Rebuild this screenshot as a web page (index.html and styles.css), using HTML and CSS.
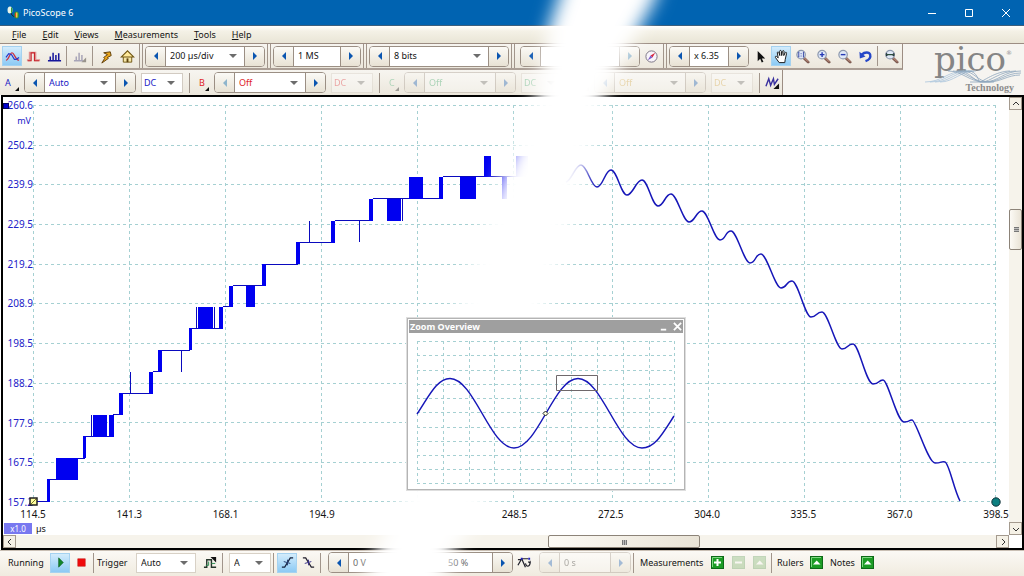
FILE: index.html
```html
<!DOCTYPE html>
<html lang="en">
<head>
<meta charset="utf-8">
<title>PicoScope 6</title>
<link rel="stylesheet" href="styles.css">
</head>
<body>
<svg class="defs" aria-hidden="true">
  <symbol id="prev" viewBox="0 0 6 8"><path d="M5 0v8L1 4z" fill="currentColor"/></symbol>
  <symbol id="next" viewBox="0 0 6 8"><path d="M1 0v8l4-4z" fill="currentColor"/></symbol>
  <symbol id="lens" viewBox="0 0 16 16">
    <path d="M9.500 9.500l4.500 4.500" stroke="#7d5a50" stroke-width="3" stroke-linecap="round"/>
    <path d="M10 9.500l4 4" stroke="#d9a08c" stroke-width="1"/>
    <circle cx="6.500" cy="6" r="4.500" fill="#dfe8f6" stroke="#8c98ae" stroke-width="1.300"/>
  </symbol>
  <symbol id="green-up" viewBox="0 0 13 13">
    <rect x=".5" y=".5" width="12" height="12" fill="#1c9c25" stroke="#0d6a18"/>
    <path d="M1.500 11V1.500H11" fill="none" stroke="#7fd882"/><path d="M3 8.500h7.500L6.700 4.500z" fill="#fff"/>
  </symbol>
</svg>

<header class="titlebar">
  <svg class="app-icon" viewBox="0 0 13 13"><ellipse cx="3" cy="4" rx="2.500" ry="3.500" fill="#e8f4ea"/><path d="M4 1c2 1 2 5 0 6.500z" fill="#2f9c3c"/><path d="M4 7c1 3 3 4 4 3" stroke="#222" fill="none"/><ellipse cx="9.500" cy="9" rx="2.500" ry="3.500" fill="#2f8f34"/><path d="M9 6c-1.500 2-1.500 4 0 6z" fill="#e0392b"/><path d="M9 6.500h1.500v5H9z" fill="#f2c94c"/></svg>
  <h1 class="title">PicoScope 6</h1>
  <div class="window-buttons">
    <button aria-label="Minimize"><svg viewBox="0 0 10 10"><path d="M1 5.500h8" /></svg></button>
    <button aria-label="Maximize"><svg viewBox="0 0 10 10"><path d="M1.500 1.500h7v7h-7z"/></svg></button>
    <button aria-label="Close"><svg viewBox="0 0 10 10"><path d="M1 1l8 8M9 1L1 9"/></svg></button>
  </div>
</header>

<nav class="menubar">
  <a href="#file"><u>F</u>ile</a><a href="#edit"><u>E</u>dit</a><a href="#views"><u>V</u>iews</a><a href="#measurements"><u>M</u>easurements</a><a href="#tools"><u>T</u>ools</a><a href="#help"><u>H</u>elp</a>
</nav>

<section class="toolbars">
  <div class="toolbar-rows">
    <div class="toolbar toolbar-main">
      <button class="tool active" aria-label="Scope mode"><svg viewBox="0 0 16 16" fill="none"><path d="M1 12C4 12 5 4 7.500 4S11 12 15 12" stroke="#d02b3c" stroke-width="1.300"/><path d="M1 9l3-4 3 1 3 5h2l3-2" stroke="#2735c8" stroke-width="1.200"/></svg></button>
      <button class="tool" aria-label="Persistence mode"><svg viewBox="0 0 16 16" fill="none"><path d="M1 12h3V4h6v8h5" stroke="#e09090" stroke-width="2"/><path d="M2 12.500h3.500V4H9v8.500h5" stroke="#c6242b" stroke-width="1.200"/></svg></button>
      <button class="tool" aria-label="Spectrum mode"><svg viewBox="0 0 16 16"><path d="M1 12.500h14M3.500 12V8M6.500 12V4M9.500 12V6.500M12.500 12V4.500" stroke="#16169c" stroke-width="1.600"/></svg></button>
      <span class="sep"></span>
      <button class="tool" disabled aria-label="Spectrum options"><svg viewBox="0 0 16 16"><path d="M1 12.500h10M3.500 12V8M6.500 12V4M9.500 12V6.500" stroke="#a8a5b8" stroke-width="1.600"/><path d="M14 9v5H9z" fill="#99948c"/></svg></button>
      <span class="sep"></span>
      <button class="tool" aria-label="Auto setup"><svg viewBox="0 0 16 16"><path d="M5 4l7-1 1 4-4 2 1 1-7 5 3-5-1-1 4-3z" fill="#e8a51c" stroke="#5c3b08"/></svg></button>
      <button class="tool" aria-label="Home"><svg viewBox="0 0 16 16"><path d="M3.500 8v6h9V8" fill="#f6e6a8" stroke="#6f5511"/><path d="M1.500 8.500L8 2l6.500 6.500z" fill="#ffe99a" stroke="#6f5511" stroke-width="1.200"/><path d="M7 10h2v4H7z" fill="#5c430c"/></svg></button>
      <span class="sep double"></span>
      <div class="stepper w-time"><button aria-label="Shorter timebase"><svg><use href="#prev"/></svg></button><span class="combo"><select aria-label="Timebase"><option>200 µs/div</option></select></span><button aria-label="Longer timebase"><svg><use href="#next"/></svg></button></div>
      <span class="sep double"></span>
      <div class="stepper w-samples"><button aria-label="Fewer samples"><svg><use href="#prev"/></svg></button><input aria-label="Samples" value="1 MS"><button aria-label="More samples"><svg><use href="#next"/></svg></button></div>
      <span class="sep double"></span>
      <div class="stepper w-bits"><button aria-label="Lower resolution"><svg><use href="#prev"/></svg></button><span class="combo"><select aria-label="Resolution"><option>8 bits</option></select></span><button aria-label="Higher resolution"><svg><use href="#next"/></svg></button></div>
      <span class="sep double"></span>
      <div class="stepper w-buffer"><button aria-label="Previous buffer"><svg><use href="#prev"/></svg></button><input aria-label="Buffer"><button disabled aria-label="Next buffer"><svg><use href="#next"/></svg></button></div>
      <button class="tool" aria-label="Buffer navigator"><svg viewBox="0 0 16 16"><circle cx="8" cy="8" r="6" fill="#f8f4fb" stroke="#75707f"/><path d="M12 4L9 9 7 7z" fill="#d7263d"/><path d="M4 12l3-5 2 2z" fill="#7a58c9"/></svg></button>
      <span class="sep double"></span>
      <div class="stepper w-zoom"><button aria-label="Less zoom"><svg><use href="#prev"/></svg></button><input aria-label="Zoom factor" value="x 6.35"><button aria-label="More zoom"><svg><use href="#next"/></svg></button></div>
      <button class="tool" aria-label="Select"><svg viewBox="0 0 16 16"><path d="M5 2v11l2.700-2.500 1.600 4 1.800-.8-1.700-3.700H13z" fill="#111"/></svg></button>
      <button class="tool active" aria-label="Hand"><svg viewBox="0 0 16 16"><path d="M5.500 14.500L1.500 9c-.5-1.300.8-1.700 1.600-.8L4.500 9.500 3.500 4c0-1.200 1.400-1.200 1.700-.2l1 3.200L6 2.500c0-1.300 1.700-1.300 1.900 0L8.200 7l.8-4.500c.3-1.200 1.800-1 1.700.3L10.400 7l1.500-3c.6-1 1.900-.4 1.500.7L12 11l-.5 3.500z" fill="#fff" stroke="#111"/></svg></button>
      <button class="tool" aria-label="Marquee zoom"><svg viewBox="0 0 16 16"><use href="#lens"/><path d="M3.500 3.500h1M3.500 8.500h1M8.500 3.500h1M8.500 8.500h1M4 3.500v5M9 3.500v5M6.500 4.500v1M6.500 7v1" stroke="#3846a5" fill="none"/></svg></button>
      <button class="tool" aria-label="Zoom in"><svg viewBox="0 0 16 16"><use href="#lens"/><path d="M4 6h5M6.500 3.500v5" stroke="#263ab5" stroke-width="1.500"/></svg></button>
      <button class="tool" aria-label="Zoom out"><svg viewBox="0 0 16 16"><use href="#lens"/><path d="M4 6h5" stroke="#263ab5" stroke-width="1.500"/></svg></button>
      <button class="tool" aria-label="Undo zoom"><svg viewBox="0 0 16 16"><path d="M4 6c3-3 8-3 9 0 .8 3-1 5.500-5 7" fill="none" stroke="#2446c8" stroke-width="2.500"/><path d="M1.500 3l.5 7 6-2z" fill="#2446c8"/></svg></button>
      <span class="sep"></span>
      <button class="tool" aria-label="Zoom to full view"><svg viewBox="0 0 16 16"><use href="#lens"/><path d="M2 4l3 2-3 2zM11 4L8 6l3 2z" fill="#1e2a38"/><path d="M2 6h9" stroke="#2d4d3e" stroke-width="1.300"/></svg></button>
    </div>

    <div class="toolbar toolbar-channels">
      <button class="channel ch-a">A</button>
      <div class="stepper w-range ch-a"><button aria-label="Lower range A"><svg><use href="#prev"/></svg></button><span class="combo"><select aria-label="Range A"><option>Auto</option></select></span><button aria-label="Higher range A"><svg><use href="#next"/></svg></button></div>
      <span class="combo w-coupling ch-a"><select aria-label="Coupling A"><option>DC</option></select></span>
      <span class="sep"></span>
      <button class="channel ch-b">B</button>
      <div class="stepper w-range ch-b"><button class="faint" aria-label="Lower range B"><svg><use href="#prev"/></svg></button><span class="combo"><select aria-label="Range B"><option>Off</option></select></span><button aria-label="Higher range B"><svg><use href="#next"/></svg></button></div>
      <span class="combo w-coupling ch-b dim"><select aria-label="Coupling B" disabled><option>DC</option></select></span>
      <span class="sep"></span>
      <button class="channel ch-c dim">C</button>
      <div class="stepper w-range ch-c dim"><button aria-label="Lower range C"><svg><use href="#prev"/></svg></button><span class="combo"><select aria-label="Range C"><option>Off</option></select></span><button aria-label="Higher range C"><svg><use href="#next"/></svg></button></div>
      <span class="combo w-coupling ch-c dim"><select aria-label="Coupling C" disabled><option>DC</option></select></span>
      <span class="sep"></span>
      <button class="channel ch-d dim">D</button>
      <div class="stepper w-range ch-d dim"><button aria-label="Lower range D"><svg><use href="#prev"/></svg></button><span class="combo"><select aria-label="Range D"><option>Off</option></select></span><button aria-label="Higher range D"><svg><use href="#next"/></svg></button></div>
      <span class="combo w-coupling ch-d dim"><select aria-label="Coupling D" disabled><option>DC</option></select></span>
      <span class="sep"></span>
      <button class="tool" aria-label="Signal generator"><svg viewBox="0 0 16 16"><path d="M1 12l3-8 2 7 3-7 1 6 4-6" fill="none" stroke="#39309f" stroke-width="1.500"/><path d="M15 9v6H9z" fill="#111"/></svg></button>
    </div>
  </div>
  <div class="logo">
    <div class="logo-name">pico<sup>®</sup></div>
    <svg class="logo-waves" viewBox="0 0 98 13" fill="none">
      <g stroke="#a9c4dc" stroke-width=".8"><path d="M1 12C18 12 24 1 40 1"/><path d="M6 12C22 12 28 1 44 1"/><path d="M11 12C26 12 32 1 48 1"/><path d="M16 12C30 12 36 1 52 1"/></g>
      <g stroke="#8ea6bd" stroke-width=".8"><path d="M24 1C38 1 46 12 60 12S80 1 97 1"/><path d="M29 1C42 1 49 12 62 12S82 3 97 3"/><path d="M34 1C46 1 50 12 58 12S76 1 92 1"/><path d="M39 1C50 1 54 12 65 12S84 5 96 5"/><path d="M44 1C54 1 54 12 56 12S72 1 86 1"/><path d="M32 1H50M46 12H70"/></g>
    </svg>
    <div class="logo-sub">Technology</div>
  </div>
</section>

<main class="scope">
  <div class="y-axis">
    <span>260.6</span><span>250.2</span><span>239.9</span><span>229.5</span><span>219.2</span><span>208.9</span><span>198.5</span><span>188.2</span><span>177.9</span><span>167.5</span><span>157.2</span>
    <i class="channel-handle"></i><em class="y-unit">mV</em>
  </div>
  <svg class="plot" viewBox="0 0 963 397" preserveAspectRatio="none">
    <g class="grid">
      <path d="M0 .5H963M0 40.500H963M0 79.500H963M0 119.500H963M0 159.500H963M0 198.500H963M0 238.500H963M0 278.500H963M0 317.500H963M0 357.500H963M0 396.500H963"/>
      <path d="M.5 0V397M96.500 0V397M192.500 0V397M288.500 0V397M384.500 0V397M480.500 0V397M579.500 0V397M675.500 0V397M771.500 0V397M867.500 0V397M962.500 0V397"/>
    </g>
    <path class="steps-line" d="M0 396.500H15M17 374.500H25M44 353.500H52M53 331.500H78M80 309.500H88M90 288.500H118M97.500 288V267M120 266.500H127M129 245.500H157M148.500 245V267M158 223.500H188M163.500 223V202M181.500 223V202M190 201.500H198M200 180.500H231M233 159.500H265M267 137.500H300M276.500 137V116M302 115.500H337M326.500 116V137M340 93.500H408M369.500 94V116M410 71.500H490M58.500 331V310"/>
    <path class="steps-fill" d="M14 374h3v23h-3zM23 353h22v22H23zM50 331h3v22h-3zM60 310h14v22H60zM76 310h5v22h-5zM86 288h4v22h-4zM116 267h4v22h-4zM125 245h4v22h-4zM156 223h3v22h-3zM165 202h15v22h-15zM186 202h4v22h-4zM196 181h4v21h-4zM213 181h9v21h-9zM229 159h4v22h-4zM263 137h4v22h-4zM298 116h4v22h-4zM336 94h4v22h-4zM354 94h14v22h-14zM376 72h14v22h-14zM406 72h4v22h-4zM427 72h16v22h-16zM451 51h7v21h-7zM469 72h5v22h-5zM483 51h12v21h-12z"/>
    <path class="trace" d="M533 77C539 75 542 60 548 60S558 82 564 82 572 65 578 65 588 90 594 90 603 75 609 75 619 101 625 101 632 89 638 89 650 117 656 117 663 106 669 106 681 135 687 135 692 126 698 126 711 158 717 158 722 149 728 149 742 183 748 183 753 176 759 176 772 212 778 212 783 207 789 207 803 244 809 244 814 239 820 239 833 279 840 279 845 275 850 275 864 317 871 317 875 315 879 315 895 358 902 358 908 356 912 357 921 385 927 396"/>
  </svg>
  <svg class="marker marker-origin" viewBox="0 0 9 9"><path d="M1 1h7v7H1z" fill="#ffffa0" stroke="#222" stroke-width="1.500"/><path d="M2 7l5-5" stroke="#77772a"/></svg>
  <svg class="marker marker-end" viewBox="0 0 10 10"><circle cx="5" cy="5" r="4.200" fill="#0d7f80" stroke="#12333a"/></svg>
  <div class="x-axis"><span>114.5</span><span>141.3</span><span>168.1</span><span>194.9</span><span></span><span>248.5</span><span>272.5</span><span>304.0</span><span>335.5</span><span>367.0</span><span>398.5</span></div>
  <div class="x-unit"><span class="scale">x1.0</span><span>µs</span></div>
  <div class="scroll scroll-y">
    <button aria-label="Scroll up"><svg viewBox="0 0 8 8"><path d="M1 5l3-3 3 3"/></svg></button>
    <div class="track"><div class="thumb"></div></div>
    <button aria-label="Scroll down"><svg viewBox="0 0 8 8"><path d="M1 3l3 3 3-3"/></svg></button>
  </div>
  <div class="scroll scroll-x">
    <button aria-label="Scroll left"><svg viewBox="0 0 8 8"><path d="M5 1L2 4l3 3"/></svg></button>
    <div class="track"><div class="thumb"></div></div>
    <button aria-label="Scroll right"><svg viewBox="0 0 8 8"><path d="M3 1l3 3-3 3"/></svg></button>
  </div>

  <section class="overview">
    <header><h2>Zoom Overview</h2>
      <button aria-label="Minimize overview"><svg viewBox="0 0 10 10"><path d="M2 8.500h6"/></svg></button>
      <button aria-label="Close overview"><svg viewBox="0 0 10 10"><path d="M1 1l8 8M9 1L1 9"/></svg></button>
    </header>
    <svg class="overview-plot" viewBox="0 0 258 143">
      <path class="grid" d="M0 .5H258M0 14.500H258M0 29.500H258M0 43.500H258M0 57.500H258M0 71.500H258M0 86.500H258M0 100.500H258M0 114.500H258M0 128.500H258M0 142.500H258M.5 0V143M26.500 0V143M52.500 0V143M77.500 0V143M103.500 0V143M129.500 0V143M154.500 0V143M180.500 0V143M206.500 0V143M232.500 0V143M257.500 0V143"/>
      <path class="trace" d="M0 73C12 55 20 37.500 33 37.500C57 37.500 73 107 97 107S137 37.500 161 37.500 201 107 225 107C238 107 246 92 257 75"/>
      <path d="M139.500 34.500h41v15h-41z" fill="none" stroke="#6f686b"/>
      <path d="M128.500 70l2.500 2.500-2.500 2.500-2.500-2.500z" fill="#ffd" stroke="#222"/>
    </svg>
  </section>
</main>

<footer class="statusbar">
  <span class="w-running">Running</span>
  <button class="tool active" aria-label="Start"><svg viewBox="0 0 16 16"><path d="M6 3v10l5-5z" fill="#11862b" stroke="#0b5a1d" stroke-width=".6"/></svg></button>
  <button class="tool" aria-label="Stop"><svg viewBox="0 0 16 16"><path d="M4 4h8v8H4z" fill="#f00a0a" stroke="#c01818" stroke-width=".6"/></svg></button>
  <span class="sep"></span>
  <label class="w-trigger" for="trigger">Trigger</label>
  <span class="combo w-trigger-mode"><select id="trigger"><option>Auto</option></select></span>
  <button class="tool" aria-label="Advanced trigger"><svg viewBox="0 0 16 16" fill="none"><path d="M1 13h3V5h5v8h5" stroke="#26352b" stroke-width="1.500"/><path d="M3 11h3V7M9 9h4" stroke="#268b4e"/><path d="M8 2h6v6z" fill="#111"/></svg></button>
  <span class="sep"></span>
  <span class="combo w-source"><select aria-label="Trigger source"><option>A</option></select></span>
  <span class="sep"></span>
  <button class="tool active" aria-label="Rising edge"><svg viewBox="0 0 16 16" fill="none"><path d="M2 13h3l6-10h3" stroke="#16233e" stroke-width="1.300"/><path d="M4 7l7 2M8 5v6" stroke="#21386a"/></svg></button>
  <button class="tool" aria-label="Falling edge"><svg viewBox="0 0 16 16" fill="none"><path d="M2 3h3l6 10h3" stroke="#22202e" stroke-width="1.300"/><path d="M4 9l7-2M8 5v6" stroke="#352c85"/></svg></button>
  <span class="sep"></span>
  <div class="stepper w-threshold"><button aria-label="Lower threshold"><svg><use href="#prev"/></svg></button><input aria-label="Threshold" value="0 V"><button aria-label="Raise threshold"><svg><use href="#next"/></svg></button></div>
  <div class="stepper w-pre"><input aria-label="Pre-trigger" value="50 %"><button aria-label="More pre-trigger"><svg><use href="#next"/></svg></button></div>
  <button class="tool" aria-label="Post-trigger delay"><svg viewBox="0 0 16 16" fill="none"><path d="M1 11l4-7h7M1 5h4M5 4l4 9" stroke="#20202a" stroke-width="1.300"/><path d="M9 9c1 4 4 4 5 0l-2-2M14 9v-3" stroke="#20202a" stroke-width="1.200"/><path d="M4 3h2v2H4zM12 3h2v2h-2z" fill="#2020c0"/></svg></button>
  <div class="stepper w-delay dim"><button aria-label="Shorter delay"><svg><use href="#prev"/></svg></button><input aria-label="Delay" value="0 s"><button aria-label="Longer delay"><svg><use href="#next"/></svg></button></div>
  <span class="sep"></span>
  <span class="w-measurements">Measurements</span>
  <button class="tool" aria-label="Add measurement"><svg viewBox="-1 -1 15 15"><rect x=".5" y=".5" width="12" height="12" fill="#1c9c25" stroke="#0d6a18"/><path d="M1.500 11V1.500H11" fill="none" stroke="#7fd882"/><path d="M3 6.500h7M6.500 3v7" stroke="#fff" stroke-width="2"/></svg></button>
  <button class="tool" disabled aria-label="Remove measurement"><svg class="dim" viewBox="-1 -1 15 15"><rect x=".5" y=".5" width="12" height="12" fill="#7cb56e" stroke="#5c9a58"/><path d="M3 6.500h7" stroke="#fff" stroke-width="2"/></svg></button>
  <button class="tool" disabled aria-label="Edit measurement"><svg class="dim" viewBox="-1 -1 15 15"><rect x=".5" y=".5" width="12" height="12" fill="#7cb56e" stroke="#5c9a58"/><path d="M3 8.500h7.500L6.700 4.500z" fill="#fff"/></svg></button>
  <span class="sep"></span>
  <span class="w-rulers">Rulers</span>
  <button class="tool" aria-label="Show rulers"><svg viewBox="-1 -1 15 15"><use href="#green-up" width="13" height="13"/></svg></button>
  <span class="w-notes">Notes</span>
  <button class="tool" aria-label="Show notes"><svg viewBox="-1 -1 15 15"><use href="#green-up" width="13" height="13"/></svg></button>
</footer>

<svg class="wash" viewBox="0 0 1024 576" preserveAspectRatio="none" aria-hidden="true">
  <filter id="soft" x="-20%" y="-20%" width="140%" height="140%"><feGaussianBlur stdDeviation="9"/></filter>
  <path filter="url(#soft)" fill="#fff" d="M572-40L558 0 548 30 538 90 500 180 470 265 400 502 376 549 352 620H430L454 549 490 502 560 265 586 170 604 96 638 30 655 0 667-40z"/>
</svg>
</body>
</html>
```
FILE: styles.css
```css
* { box-sizing: border-box; }

body {
  position: relative;
  display: flex;
  flex-direction: column;
  min-height: 100vh;
  margin: 0;
  overflow: hidden;
  background: #fff;
  color: #141414;
  font: 9px/12px "Noto Sans", "Open Sans", sans-serif;
}

button, input, select { font: inherit; color: inherit; margin: 0; }
button { display: flex; align-items: center; justify-content: center; padding: 0; border: 0; background: none; }
.defs { position: absolute; width: 0; height: 0; }

/* Title bar and menu */
.titlebar { display: flex; align-items: center; height: 26px; padding: 0 7px; background: #0063b1; color: #fff; border-bottom: 1px solid #3d5f7c; }
.app-icon { width: 13px; height: 13px; margin-right: 3px; }
.title { margin: 0; font-size: 9px; font-weight: 400; }
.window-buttons { display: flex; gap: 27px; margin-left: auto; padding-right: 6px; }
.window-buttons svg { display: block; width: 10px; height: 10px; fill: none; stroke: #fff; }

.menubar { display: flex; align-items: center; gap: 16px; height: 17px; padding: 0 12px; background: linear-gradient(#fff, #f4f1e6 30%, #e9e5d6); }
.menubar a { color: inherit; text-decoration: none; }

/* Toolbars */
.toolbars { display: flex; justify-content: space-between; height: 52px; border-top: 1px solid #9c8d83; background: #f6f4f0; }
.toolbar-rows { display: flex; flex-direction: column; align-items: flex-start; }
.toolbar { display: flex; align-items: center; height: 26px; background: linear-gradient(#f7f5f0, #ece7dc); border-right: 1px solid #9c8d83; border-bottom: 2px solid #ab9f96; }
.toolbar-main { padding: 0 1px 0 2px; gap: 1px; }
.toolbar-channels { border-bottom: 0; }

.tool { flex: none; width: 20px; height: 20px; }
.tool svg { width: 15px; height: 15px; }
.tool.active { background: linear-gradient(#d3ecfc, #8ccaf4); border: 1px solid #a5d2f0; }

.sep { flex: none; width: 2px; height: 20px; border-left: 1px solid #a1958b; margin: 0 1px; }
.sep.double { width: 4px; height: 24px; border-right: 1px solid #a1958b; }

.stepper { display: flex; flex: none; height: 21px; border: 1px solid #9b8f84; border-radius: 4px; overflow: hidden; background: #fff; }
.stepper > button { flex: none; width: 20px; background: linear-gradient(#fbfaf6, #e8e2d4); color: #0a55b0; }
.stepper > button svg { width: 6px; height: 8px; }
.stepper > button:first-child { border-right: 1px solid #9b8f84; }
.stepper > button:last-child { border-left: 1px solid #9b8f84; }
.stepper > button:disabled, .stepper > .faint { color: #8fb5cc; }
.stepper input { flex: 1; min-width: 0; padding: 0 4px; border: 0; background: #fff; }

.combo { position: relative; display: flex; flex: 1; min-width: 0; }
.combo select { flex: 1; min-width: 0; padding: 0 4px; border: 0; border-radius: 0; background: #fff; appearance: none; opacity: 1; }
.combo::after { content: ""; position: absolute; right: 7px; top: calc(50% - 2px); border: 4px solid transparent; border-top-color: #6c6c6c; border-bottom: 0; pointer-events: none; }
.dim { opacity: .35; }

.w-time { width: 120px; }
.w-samples { width: 88px; }
.w-bits { width: 140px; }
.w-buffer { width: 120px; margin-left: 3px; }
.w-zoom { width: 80px; }
.w-range { width: 112px; }
.w-coupling { flex: none; width: 42px; height: 20px; border: 1px solid #d2cbc2; margin: 0 5px; }
.w-coupling select { padding: 0 2px; }

.channel { position: relative; flex: none; justify-content: flex-start; width: 24px; height: 20px; padding-left: 5px; }
.sep + .channel { width: 20px; margin-left: 2px; }
.channel::after { content: ""; position: absolute; right: 5px; bottom: 2px; border: 2px solid #111; border-top-color: transparent; border-left-color: transparent; }
.ch-a { color: #2020c4; }
.ch-b { color: #e01c28; }
.ch-c { color: #2fa566; }
.ch-d { color: #d6a640; }

/* Logo */
.logo { display: flex; flex-direction: column; align-items: center; padding: 0 2px 0 0; color: #858585; }
.logo-name { height: 27px; font: 34px/32px "DejaVu Serif", serif; margin-top: -1px; }
.logo-name sup { font-size: 6px; line-height: 6px; vertical-align: 16px; }
.logo-waves { width: 98px; height: 13px; }
.logo-sub { align-self: flex-end; padding-right: 8px; font: bold 10px/10px "Liberation Serif", serif; color: #8c8c8c; }

/* Scope view */
.scope {
  position: relative;
  flex: 1;
  display: grid;
  grid-template: 8px minmax(0, 1fr) 20px 13px 13px / 30px minmax(0, 1fr) 13px 13px;
  min-height: 300px;
  margin-left: 1px;
  border: 2px solid #000;
  background: #fff;
  font-size: 10px;
}
.grid { fill: none; stroke: #a5d0d2; stroke-dasharray: 3 3; }
.plot { grid-area: 2 / 2; width: 100%; height: 100%; overflow: visible; }
.steps-line { fill: none; stroke: #0a0abe; }
.steps-fill { fill: #0000f0; }
.trace { fill: none; stroke: #1616b8; stroke-width: 1.5; }

.y-axis { grid-area: 2 / 1; position: relative; display: flex; flex-direction: column; justify-content: space-between; align-items: flex-end; margin: -6px 0; color: #2020c8; }
.y-unit { position: absolute; right: 2px; top: 16px; font-style: normal; font-size: 9px; }
.channel-handle { position: absolute; left: 0; top: 4px; width: 6px; height: 6px; background: #0000d0; border: 1px solid #000060; }
.x-axis { grid-area: 3 / 2; display: flex; justify-content: space-between; margin: 6px -17px 0; }
.x-axis span { width: 34px; text-align: center; }
.x-unit { grid-area: 4 / 1 / 5 / 3; display: flex; align-items: center; gap: 4px; padding-left: 1px; font-size: 9px; }
.scale { width: 28px; height: 11px; background: #7878f0; color: #fff; font-size: 8px; line-height: 11px; text-align: center; }
.marker { grid-area: 2 / 2; align-self: end; z-index: 1; }
.marker-origin { width: 9px; height: 9px; margin: 0 0 -4px -4px; }
.marker-end { width: 10px; height: 10px; justify-self: end; margin: 0 -5px -5px 0; }

.scroll { display: flex; background: #f6f3eb; }
.scroll button { flex: none; width: 13px; height: 13px; border: 1px solid #a49a8e; background: #f5f1e6; }
.scroll svg { width: 8px; height: 8px; fill: none; stroke: #333; }
.track { position: relative; flex: 1; }
.thumb { position: absolute; border: 1px solid #8c8378; border-radius: 2px; background: linear-gradient(90deg, #fcfaf5, #e9e3d6); }
.thumb::after { content: ""; position: absolute; left: calc(50% - 2px); top: calc(50% - 2px); width: 5px; height: 5px; background: repeating-linear-gradient(90deg, #777 0 1px, #bbb 1px 2px); }
.scroll-y { grid-area: 1 / 4 / 5 / 5; flex-direction: column; }
.scroll-y .thumb { top: 24%; left: 0; width: 13px; height: 10%; }
.scroll-y .thumb::after { background: repeating-linear-gradient(#777 0 1px, #bbb 1px 2px); }
.scroll-x { grid-area: 5 / 1 / 6 / 4; }
.scroll-x .thumb { left: 54.3%; top: 0; width: 15.5%; height: 13px; }

/* Floating overview window */
.overview { position: absolute; z-index: 2; left: 403px; top: 220px; width: 280px; padding: 1px; border: 2px solid #b4b4b4; outline: 1px solid #dedede; outline-offset: -1px; background: #fff; }
.overview header { display: flex; align-items: center; gap: 5px; height: 13px; padding: 0 1px; background: #9f9f9f; color: #fff; }
.overview h2 { flex: 1; margin: 0; font-size: 9px; font-weight: 700; }
.overview header svg { width: 9px; height: 9px; fill: none; stroke: #fff; stroke-width: 2; }
.overview-plot { display: block; width: 258px; height: 143px; margin: 8px auto 4px 8px; overflow: visible; }

/* Status bar */
.statusbar { display: flex; align-items: center; height: 26px; gap: 1px; padding: 0 0 2px 8px; background: linear-gradient(#fbf9f5, #f0ebdf); border-top: 1px solid #c9bfb4; }
.statusbar > span, .statusbar > label { flex: none; }
.statusbar .combo { height: 20px; border: 1px solid #d8d1c6; }
.w-running { width: 41px; }
.w-trigger { width: 38px; }
.statusbar .w-trigger-mode { width: 60px; margin-right: 3px; }
.statusbar .w-source { width: 42px; margin-left: 3px; }
.w-threshold { width: 92px; margin-left: 4px; }
.w-pre { width: 92px; }
.w-pre input { padding-left: 26px; color: #666; }
.w-threshold input { color: #666; }
.w-delay { width: 92px; margin-left: 4px; }
.w-measurements { width: 66px; margin-left: 3px; }
.w-rulers { width: 28px; margin-left: 2px; }
.w-notes { width: 26px; margin-left: 3px; }

/* Soft white diagonal between the two captures */
.wash { position: absolute; z-index: 1; inset: 0; width: 100%; height: 100%; pointer-events: none; }
```
